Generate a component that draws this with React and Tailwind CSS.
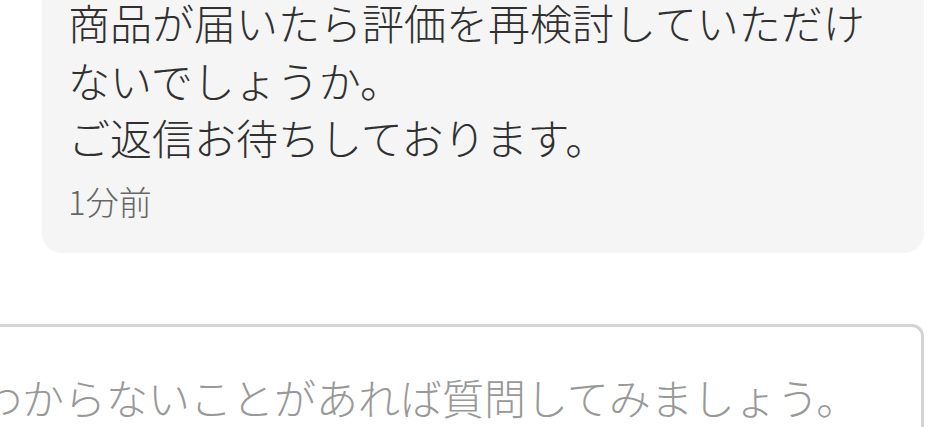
import React from 'react';

const font = { fontFamily: '"Noto Sans CJK JP", "Noto Sans", sans-serif' };

export default function App() {
  return (
    <div className="w-[934px] h-[427px] overflow-hidden bg-white" style={font}>
      <div className="ml-[42px] mr-[10px] rounded-b-[20px] bg-[#f5f5f5] pl-[26px] pr-[20px] pb-[31px] -mt-[7px]">
        <p className="text-[42px] font-light leading-[57.5px] text-[#303030]">
          商品が届いたら評価を再検討していただけ
          <br />
          ないでしょうか。
          <br />
          ご返信お待ちしております。
        </p>
        <p className="mt-[14px] text-[33px] font-light leading-[42px] text-[#666666]">1分前</p>
      </div>
      <div className="mt-[71px] -ml-[41px] mr-[10px] h-[160px] rounded-[12px] border-[3px] border-[#d4d4d4] bg-white pl-[18px] pt-[41px]">
        <p className="text-[42px] font-light leading-[57.75px] text-[#999999] whitespace-nowrap">
          わからないことがあれば質問してみましょう。
        </p>
      </div>
    </div>
  );
}
